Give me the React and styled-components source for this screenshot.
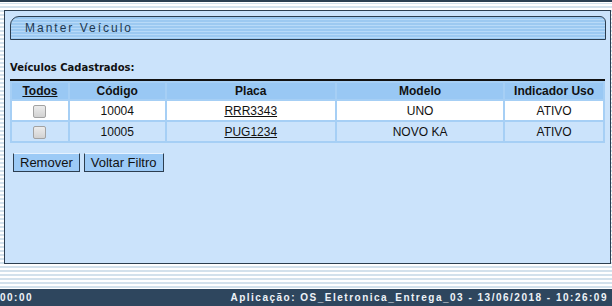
import React from 'react'
import styled, { createGlobalStyle } from 'styled-components'

const GlobalStyle = createGlobalStyle`
  html, body {
    margin: 0;
    padding: 0;
  }
  body {
    font-family: "Liberation Sans", Arial, sans-serif;
    background: repeating-linear-gradient(180deg, #ffffff 0 2px, #d3e1ec 2px 4px);
  }
`

const Page = styled.div`
  width: 612px;
  height: 306px;
  display: flex;
  flex-direction: column;
  overflow: hidden;
`

const TopLine = styled.div`
  height: 2px;
  background: #2b3f52;
  border-bottom: 1px solid #ffffff;
`

const Main = styled.div`
  flex: 1;
  padding: 7px 1px 25px 4px;
  display: flex;
`

const Panel = styled.section`
  flex: 1;
  background: #cbe3fb;
  border: 1px solid #2c3e50;
  padding: 5px 4px 0 5px;
`

const TitleBar = styled.div`
  height: 22px;
  border: 1px solid #2c3e50;
  border-radius: 9px 6px 0 0;
  background: repeating-linear-gradient(180deg, #9cc9f1 0 2px, #b8daf8 2px 3px);
  display: flex;
  align-items: center;
  padding-left: 14px;
  font-size: 12px;
  letter-spacing: 2px;
  color: #1e3850;
`

const Label = styled.div`
  margin: 22px 0 0 0;
  font-family: "DejaVu Sans", Verdana, sans-serif;
  font-weight: bold;
  font-size: 10px;
  color: #111;
  height: 13px;
`

const Table = styled.table`
  margin-top: 4px;
  width: 595px;
  border-collapse: separate;
  border-spacing: 2px;
  background: #a6cff5;
  border-top: 2px solid #111;
  font-size: 12px;
  color: #111;
`

const Th = styled.th`
  background: #99c8f4;
  height: 16px;
  padding: 0;
  font-weight: bold;
  text-align: center;
  width: ${p => p.$w}px;
`

const Td = styled.td`
  background: ${p => (p.$alt ? '#cbe3fb' : '#ffffff')};
  height: 19px;
  padding: 0;
  text-align: center;
`

const HeadLink = styled.span`
  text-decoration: underline;
`

const PlacaLink = styled.a`
  color: #111;
  text-decoration: underline;
`

const Check = styled.span`
  display: inline-block;
  width: 11px;
  height: 11px;
  border: 1px solid #a2a2a2;
  border-radius: 2px;
  background: linear-gradient(180deg, #ececec, #d2d2d2);
  vertical-align: middle;
`

const Actions = styled.div`
  display: flex;
  gap: 4px;
  margin: 10px 0 0 3px;
`

const Button = styled.button`
  font-family: "Liberation Sans", Arial, sans-serif;
  font-size: 13px;
  color: #111;
  background: #9ccaf6;
  border: 1px solid;
  border-color: #e6f2ff #2c3e50 #2c3e50 #2c3e50;
  height: 19px;
  padding: 0 6px;
  line-height: 17px;
`

const Footer = styled.footer`
  height: 17px;
  background: #2e465e;
  color: #eef3f8;
  display: flex;
  align-items: center;
  justify-content: space-between;
  font-weight: bold;
  font-size: 10px;
  letter-spacing: 1.5px;
  padding-right: 4px;
`

const rows = [
  { codigo: '10004', placa: 'RRR3343', modelo: 'UNO', indicador: 'ATIVO' },
  { codigo: '10005', placa: 'PUG1234', modelo: 'NOVO KA', indicador: 'ATIVO' },
]

export default function App() {
  return (
    <>
      <GlobalStyle />
      <Page>
        <TopLine />
        <Main>
          <Panel>
            <TitleBar>Manter Veículo</TitleBar>
            <Label>Veículos Cadastrados:</Label>
            <Table>
              <thead>
                <tr>
                  <Th $w={56}><HeadLink>Todos</HeadLink></Th>
                  <Th $w={95}>Código</Th>
                  <Th $w={169}>Placa</Th>
                  <Th $w={167}>Modelo</Th>
                  <Th $w={98}>Indicador Uso</Th>
                </tr>
              </thead>
              <tbody>
                {rows.map((r, i) => (
                  <tr key={r.codigo}>
                    <Td $alt={i % 2 === 1}><Check /></Td>
                    <Td $alt={i % 2 === 1}>{r.codigo}</Td>
                    <Td $alt={i % 2 === 1}><PlacaLink href="#">{r.placa}</PlacaLink></Td>
                    <Td $alt={i % 2 === 1}>{r.modelo}</Td>
                    <Td $alt={i % 2 === 1}>{r.indicador}</Td>
                  </tr>
                ))}
              </tbody>
            </Table>
            <Actions>
              <Button>Remover</Button>
              <Button>Voltar Filtro</Button>
            </Actions>
          </Panel>
        </Main>
        <Footer>
          <span>00:00</span>
          <span>Aplicação: OS_Eletronica_Entrega_03 - 13/06/2018 - 10:26:09</span>
        </Footer>
      </Page>
    </>
  )
}
